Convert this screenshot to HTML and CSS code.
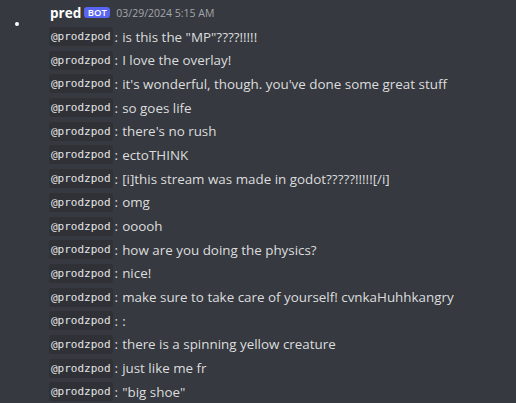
FILE: index.html
```html
<!DOCTYPE html>
<html>
<head>
<meta charset="utf-8">
<link rel="stylesheet" href="styles.css">
</head>
<body>
<div class="message">
  <div class="gutter"><span class="dot"></span></div>
  <div class="content">
    <div class="header">
      <span class="name">pred</span>
      <span class="bot">BOT</span>
      <span class="time">03/29/2024 5:15 AM</span>
    </div>
    <div class="lines">
      <div class="line"><code class="chip">@prodzpod</code><span class="colon">:</span><span class="text">is this the "MP"????!!!!!</span></div>
      <div class="line"><code class="chip">@prodzpod</code><span class="colon">:</span><span class="text">I love the overlay!</span></div>
      <div class="line"><code class="chip">@prodzpod</code><span class="colon">:</span><span class="text">it's wonderful, though. you've done some great stuff</span></div>
      <div class="line"><code class="chip">@prodzpod</code><span class="colon">:</span><span class="text">so goes life</span></div>
      <div class="line"><code class="chip">@prodzpod</code><span class="colon">:</span><span class="text">there's no rush</span></div>
      <div class="line"><code class="chip">@prodzpod</code><span class="colon">:</span><span class="text">ectoTHINK</span></div>
      <div class="line"><code class="chip">@prodzpod</code><span class="colon">:</span><span class="text">[i]this stream was made in godot?????!!!!![/i]</span></div>
      <div class="line"><code class="chip">@prodzpod</code><span class="colon">:</span><span class="text">omg</span></div>
      <div class="line"><code class="chip">@prodzpod</code><span class="colon">:</span><span class="text">ooooh</span></div>
      <div class="line"><code class="chip">@prodzpod</code><span class="colon">:</span><span class="text">how are you doing the physics?</span></div>
      <div class="line"><code class="chip">@prodzpod</code><span class="colon">:</span><span class="text">nice!</span></div>
      <div class="line"><code class="chip">@prodzpod</code><span class="colon">:</span><span class="text">make sure to take care of yourself! cvnkaHuhhkangry</span></div>
      <div class="line"><code class="chip">@prodzpod</code><span class="colon">:</span><span class="text">:</span></div>
      <div class="line"><code class="chip">@prodzpod</code><span class="colon">:</span><span class="text">there is a spinning yellow creature</span></div>
      <div class="line"><code class="chip">@prodzpod</code><span class="colon">:</span><span class="text">just like me fr</span></div>
      <div class="line"><code class="chip">@prodzpod</code><span class="colon">:</span><span class="text">"big shoe"</span></div>
    </div>
  </div>
</div>
</body>
</html>
```

FILE: styles.css
```css
html, body {
  margin: 0;
  padding: 0;
  background: #36393f;
  width: 516px;
  height: 403px;
  overflow: hidden;
}
body {
  font-family: "Open Sans", "Noto Sans", sans-serif;
  color: #dcddde;
}
.message {
  display: flex;
}
.gutter {
  width: 49px;
  flex: none;
  padding-top: 22px;
  padding-left: 15px;
  box-sizing: border-box;
}
.dot {
  display: block;
  width: 4px;
  height: 4px;
  border-radius: 50%;
  background: #ffffff;
}
.content {
  flex: 1;
}
.header {
  display: flex;
  align-items: center;
  height: 25px;
  padding-left: 1px;
}
.name {
  font-size: 13.5px;
  font-weight: 700;
  color: #ffffff;
  line-height: 20px;
}
.bot {
  margin-left: 3px;
  background: #5865f2;
  color: #ffffff;
  font-size: 9.5px;
  font-weight: 600;
  line-height: 11px;
  height: 11px;
  padding: 0 3.5px;
  border-radius: 3px;
}
.time {
  margin-left: 6px;
  font-size: 10.5px;
  color: #a3a6aa;
}
.lines {
  display: flex;
  flex-direction: column;
  gap: 4.7px;
  padding-top: 2px;
}
.line {
  display: flex;
  align-items: center;
  height: 19px;
  font-size: 13.4px;
}
.chip {
  font-family: "DejaVu Sans Mono", monospace;
  font-size: 11px;
  background: #2f3136;
  color: #e3e4e6;
  height: 19px;
  line-height: 19px;
  padding: 0 2px;
  border-radius: 3px;
}
.colon {
  margin-left: 2px;
  margin-right: 4px;
}
```
